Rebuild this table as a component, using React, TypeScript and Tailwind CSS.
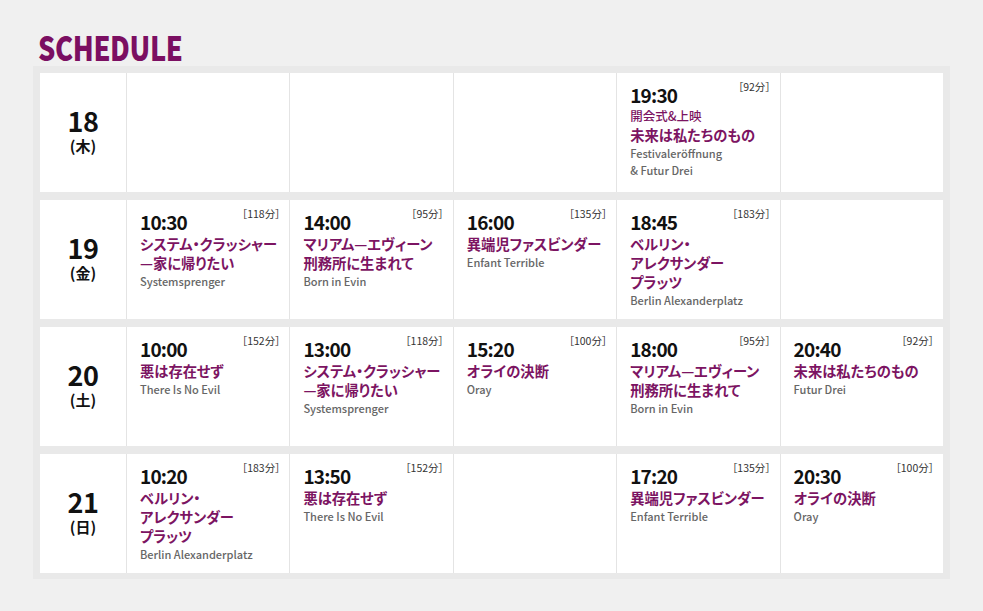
import React from "react";

type Film = {
  time: string;
  dur: string;
  pre?: string;
  title: string[];
  en: string[];
};

const rows: { day: string; wd: string; cells: (Film | null)[] }[] = [
  {
    day: "18",
    wd: "(木)",
    cells: [
      null,
      null,
      null,
      {
        time: "19:30",
        dur: "［92分］",
        pre: "開会式&上映",
        title: ["未来は私たちのもの"],
        en: ["Festivaleröffnung", "& Futur Drei"],
      },
      null,
    ],
  },
  {
    day: "19",
    wd: "(金)",
    cells: [
      { time: "10:30", dur: "［118分］", title: ["システム・クラッシャー", "—家に帰りたい"], en: ["Systemsprenger"] },
      { time: "14:00", dur: "［95分］", title: ["マリアム—エヴィーン", "刑務所に生まれて"], en: ["Born in Evin"] },
      { time: "16:00", dur: "［135分］", title: ["異端児ファスビンダー"], en: ["Enfant Terrible"] },
      { time: "18:45", dur: "［183分］", title: ["ベルリン・", "アレクサンダー", "プラッツ"], en: ["Berlin Alexanderplatz"] },
      null,
    ],
  },
  {
    day: "20",
    wd: "(土)",
    cells: [
      { time: "10:00", dur: "［152分］", title: ["悪は存在せず"], en: ["There Is No Evil"] },
      { time: "13:00", dur: "［118分］", title: ["システム・クラッシャー", "—家に帰りたい"], en: ["Systemsprenger"] },
      { time: "15:20", dur: "［100分］", title: ["オライの決断"], en: ["Oray"] },
      { time: "18:00", dur: "［95分］", title: ["マリアム—エヴィーン", "刑務所に生まれて"], en: ["Born in Evin"] },
      { time: "20:40", dur: "［92分］", title: ["未来は私たちのもの"], en: ["Futur Drei"] },
    ],
  },
  {
    day: "21",
    wd: "(日)",
    cells: [
      { time: "10:20", dur: "［183分］", title: ["ベルリン・", "アレクサンダー", "プラッツ"], en: ["Berlin Alexanderplatz"] },
      { time: "13:50", dur: "［152分］", title: ["悪は存在せず"], en: ["There Is No Evil"] },
      null,
      { time: "17:20", dur: "［135分］", title: ["異端児ファスビンダー"], en: ["Enfant Terrible"] },
      { time: "20:30", dur: "［100分］", title: ["オライの決断"], en: ["Oray"] },
    ],
  },
];

function Cell({ f }: { f: Film | null }) {
  if (!f) return <div className="bg-white" />;
  return (
    <div className="relative bg-white pl-[13px] pr-1 pt-[11px]">
      <div className="absolute right-[9px] top-[7px] text-[10.5px] leading-[14px] text-[#333] [font-feature-settings:'palt']">
        {f.dur}
      </div>
      <div className="text-[19px] font-bold leading-[22px] text-[#111] tracking-[-0.8px]">
        {f.time}
      </div>
      {f.pre && (
        <div className="mt-[1px] whitespace-nowrap text-[12.5px] font-medium leading-[17px] text-[#7c1462] [font-feature-settings:'palt']">
          {f.pre}
        </div>
      )}
      <div className="mt-[1px]">
        {f.title.map((t, i) => (
          <div
            key={i}
            className="whitespace-nowrap text-[14.3px] font-bold leading-[19px] text-[#7c1462] [font-feature-settings:'palt']"
          >
            {t}
          </div>
        ))}
      </div>
      <div className="mt-[1px]">
        {f.en.map((t, i) => (
          <div key={i} className="text-[11px] font-medium leading-[17px] text-[#666]">
            {t}
          </div>
        ))}
      </div>
    </div>
  );
}

export default function App() {
  return (
    <div
      className="min-h-[611px] w-[983px] bg-[#f0f0f0] pt-[28px]"
      style={{ fontFamily: '"Noto Sans CJK JP", "Noto Sans", sans-serif' }}
    >
      <div className="ml-[38px] h-[38px]">
        <span className="inline-block origin-left scale-x-[0.8] text-[34px] font-black leading-[38px] tracking-[-0.5px] text-[#7b0f62]">
          SCHEDULE
        </span>
      </div>
      <div className="ml-[33px] w-[917px] bg-[#e9e9e9] px-[7px] pb-[6px] pt-[7px]">
        <div className="flex flex-col gap-[8px]">
          {rows.map((r) => (
            <div
              key={r.day}
              className="grid h-[119px] grid-cols-[86px_repeat(5,1fr)] gap-px bg-[#e4e4e4]"
            >
              <div className="flex items-center justify-center bg-white pt-[2px]">
                <div className="text-center text-[15px] font-bold leading-[20px] text-[#111]">
                  <span className="text-[27px] tracking-[-0.5px]">{r.day}</span>
                  <br />
                  <span className="[font-feature-settings:'palt']">{r.wd}</span>
                </div>
              </div>
              {r.cells.map((c, i) => (
                <Cell key={i} f={c} />
              ))}
            </div>
          ))}
        </div>
      </div>
    </div>
  );
}
